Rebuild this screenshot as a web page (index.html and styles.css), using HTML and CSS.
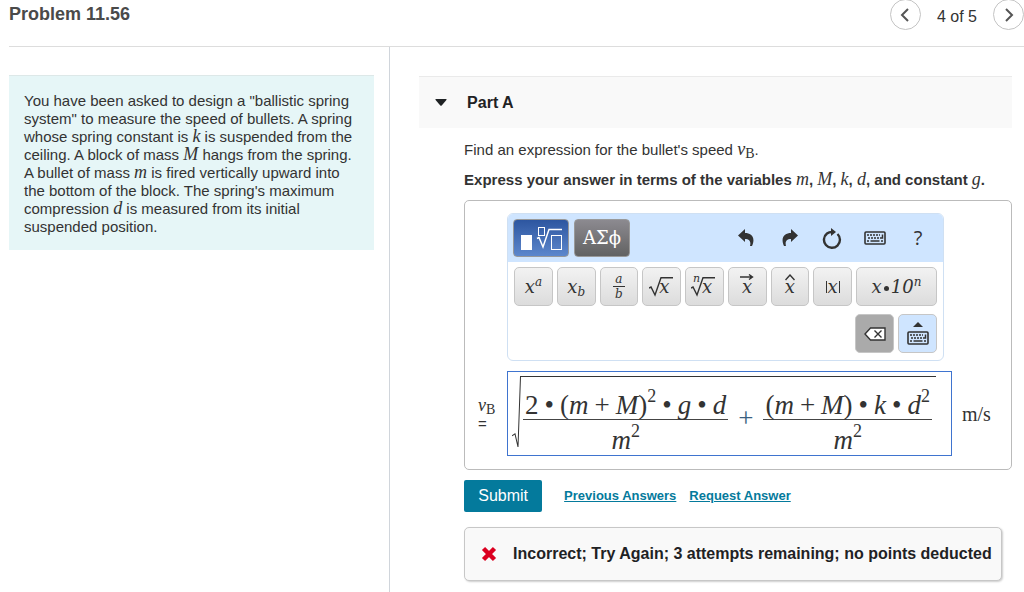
FILE: index.html
```html
<!DOCTYPE html>
<html lang="en">
<head>
    <meta charset="UTF-8">
    <meta name="viewport" content="width=device-width, initial-scale=1.0">
    <title>Problem 11.56</title>
    <link rel="stylesheet" href="styles.css">
</head>
<body>
    <!-- shared icon -->
    <svg class="sprite" aria-hidden="true">
        <symbol id="keyboard" viewBox="0 0 22 14">
            <rect x="1" y="1" width="20" height="12" rx="1" fill="none" stroke="#333" stroke-width="1.6"/>
            <path d="M3 4h2M6 4h2M9 4h2M12 4h2M15 4h1M4 7h2M7 7h2M10 7h2M13 7h2M3 10h2M6.500 10h9M17 10h2M16 7h2.500V3.500" fill="none" stroke="#333" stroke-width="1.5"/>
        </symbol>
    </svg>

    <header class="header">
        <h1>Problem 11.56</h1>
        <nav class="pager">
            <button class="round" aria-label="Previous">
                <svg width="10" height="14" viewBox="0 0 10 14"><path d="M8 1 2 7l6 6"/></svg>
            </button>
            <span>4 of 5</span>
            <button class="round" aria-label="Next">
                <svg width="10" height="14" viewBox="0 0 10 14"><path d="M2 1l6 6-6 6"/></svg>
            </button>
        </nav>
    </header>

    <main class="columns">
        <aside class="left">
            <p class="problem">You have been asked to design a "ballistic spring system" to measure the speed of bullets. A spring whose spring constant is <var>k</var> is suspended from the ceiling. A block of mass <var>M</var> hangs from the spring. A bullet of mass <var>m</var> is fired vertically upward into the bottom of the block. The spring's maximum compression <var>d</var> is measured from its initial suspended position.</p>
        </aside>

        <section class="right">
            <h2 class="part">
                <svg width="12" height="7" viewBox="0 0 12 7"><path d="M1 0h10q1 0 .4.900L6.700 6.500q-.7.700-1.400 0L.6.900Q0 0 1 0z" fill="#1f2224"/></svg>
                Part A
            </h2>

            <div class="content">
                <p class="question">Find an expression for the bullet's speed <var>v</var><span class="sub">B</span>.</p>
                <p class="express">Express your answer in terms of the variables <var>m</var>, <var>M</var>, <var>k</var>, <var>d</var>, and constant <var>g</var>.</p>

                <div class="editor">
                    <div class="toolbar">
                        <div class="top-bar">
                            <button class="tab active" aria-label="Templates">
                                <svg width="44" height="26" viewBox="0 0 44 26" fill="none" stroke="#fff">
                                    <rect x="2" y="10" width="11" height="15" fill="#fff" stroke="none"/>
                                    <rect x="19.500" y="2.500" width="6" height="8"/>
                                    <path d="M18 13.500l2-1 4 9.500L30 4.500h13" stroke-width="1.500"/>
                                    <rect x="32.500" y="10.500" width="10" height="14"/>
                                </svg>
                            </button>
                            <button class="tab greek">ΑΣϕ</button>
                            <div class="actions">
                                <button aria-label="Undo">
                                    <svg width="17" height="18" viewBox="0 0 17 18"><path d="M0 6.500 7 0v4c6 0 11 4 7 13h-2c1-4 0-7-5-7v3z" fill="#333"/></svg>
                                </button>
                                <button aria-label="Redo">
                                    <svg width="17" height="18" viewBox="0 0 17 18"><path d="M17 6.500 10 0v4C4 4-1 8 3 17h2c-1-4 0-7 5-7v3z" fill="#333"/></svg>
                                </button>
                                <button aria-label="Reset">
                                    <svg width="20" height="21" viewBox="0 0 20 21"><path d="M15.500 6A8 8 0 1 1 5 5.500Q7 4 10 4" fill="none" stroke="#333" stroke-width="2.400"/><path d="M9 0l5 4-5 4z" fill="#333"/></svg>
                                </button>
                                <button aria-label="Keyboard shortcuts"><svg width="22" height="14"><use href="#keyboard"/></svg></button>
                                <button class="help">?</button>
                            </div>
                        </div>

                        <div class="keys">
                            <button><i>x</i><sup>a</sup></button>
                            <button><i>x</i><sub>b</sub></button>
                            <button class="fraction-key"><i>a</i><i>b</i></button>
                            <button>
                                <svg width="26" height="20" viewBox="0 0 26 20"><path d="M0 11l2-1 4 8L12 .700h12"/></svg><i class="under-root">x</i>
                            </button>
                            <button>
                                <svg width="26" height="20" viewBox="0 0 26 20"><path d="M0 11l2-1 4 8L12 .700h12"/></svg><i class="under-root">x</i><i class="index">n</i>
                            </button>
                            <button>
                                <i>x</i><svg class="accent" width="14" height="6" viewBox="0 0 14 6"><path d="M0 3h12M9 .500 12.500 3 9 5.500"/></svg>
                            </button>
                            <button>
                                <i>x</i><svg class="accent" width="10" height="7" viewBox="0 0 10 7"><path d="M.5 6 5 1l4.500 5"/></svg>
                            </button>
                            <button><span class="abs">x</span></button>
                            <button class="wide"><i>x</i><span class="dot"></span><i>10</i><sup>n</sup></button>
                        </div>

                        <div class="keys bottom-keys">
                            <button class="delete" aria-label="Delete">
                                <svg width="22" height="14" viewBox="0 0 22 14"><path d="M6.500 1H21v12H6.500L1 7z"/><path d="M10.500 3.500l7 7M17.500 3.500l-7 7"/></svg>
                            </button>
                            <button class="show-keyboard" aria-label="Show keyboard">
                                <svg width="10" height="5" viewBox="0 0 10 5"><path d="M0 5 5 0l5 5z"/></svg>
                                <svg width="22" height="14"><use href="#keyboard"/></svg>
                            </button>
                        </div>
                    </div>

                    <div class="label" id="answer-label"><var>v</var><span class="sub">B</span><br>=</div>

                    <div class="answer" role="textbox" tabindex="0" aria-labelledby="answer-label">
                        <svg class="radical" viewBox="0 0 9 72" preserveAspectRatio="none"><path d="M0 59l3-2 3 13L8.500.500H9"/></svg>
                        <div class="radicand">
                            <div class="fraction">
                                <div class="numerator">
                                    <span>2</span><span class="op">•</span><span>(</span><i>m</i><span class="op">+</span><i>M</i><span>)</span><sup>2</sup><span class="op">•</span><i>g</i><span class="op">•</span><i>d</i>
                                </div>
                                <div class="denominator"><i>m</i><sup>2</sup></div>
                            </div>
                            <span class="plus">+</span>
                            <div class="fraction">
                                <div class="numerator">
                                    <span>(</span><i>m</i><span class="op">+</span><i>M</i><span>)</span><span class="op">•</span><i>k</i><span class="op">•</span><i>d</i><sup>2</sup>
                                </div>
                                <div class="denominator"><i>m</i><sup>2</sup></div>
                            </div>
                        </div>
                    </div>

                    <div class="unit">m/s</div>
                </div>

                <div class="submit-row">
                    <button class="submit">Submit</button>
                    <a href="#">Previous Answers</a>
                    <a href="#">Request Answer</a>
                </div>

                <div class="feedback">
                    <svg width="16" height="16" viewBox="0 0 16 16"><path d="M2.500 2.500l11 11M13.500 2.500l-11 11" stroke="#db0020" stroke-width="4.500"/></svg>
                    <span>Incorrect; Try Again; 3 attempts remaining; no points deducted</span>
                </div>
            </div>
        </section>
    </main>
</body>
</html>
```
FILE: styles.css
```css
* {
    box-sizing: border-box;
    margin: 0;
    padding: 0;
}

body {
    font-family: "Liberation Sans", Arial, sans-serif;
    font-size: 15px;
    line-height: 18px;
    color: #333;
    background-color: #fff;
    min-height: 100vh;
    display: flex;
    flex-direction: column;
}

button {
    font: inherit;
    color: inherit;
    cursor: pointer;
}

svg {
    flex: none;
}

.sprite {
    position: absolute;
    width: 0;
    height: 0;
}

/* variables in running text */
var {
    font-family: "Liberation Serif", "Times New Roman", serif;
    font-size: 18px;
    font-weight: normal;
    line-height: 14px;
}

.sub {
    font-family: "Liberation Serif", "Times New Roman", serif;
    font-size: 14px;
    line-height: 0;
    vertical-align: -3px;
}

/* header */
.header {
    display: flex;
    justify-content: space-between;
    height: 47px;
    margin-left: 9px;
    border-bottom: 1px solid #ddd;
}

h1 {
    font-size: 18px;
    line-height: 29px;
    color: #4a4a4a;
}

.pager {
    display: flex;
    gap: 16px;
    font-size: 16px;
    line-height: 34px;
}

.round {
    display: flex;
    align-items: center;
    justify-content: center;
    width: 31px;
    height: 31px;
    margin-top: -1px;
    border: 1px solid #c4c4c4;
    border-radius: 50%;
    background-color: #fff;
}

.round path {
    fill: none;
    stroke: #555;
    stroke-width: 2;
}

/* columns */
.columns {
    flex: 1;
    display: grid;
    grid-template-columns: 38% 1fr;
}

.left {
    padding: 28px 15px 0 9px;
}

.problem {
    padding: 16px 14px 14px 15px;
    border-top: 1px solid #dde8e8;
    background-color: #e6f6f7;
}

.right {
    padding: 29px 12px 0 29px;
    border-left: 1px solid #d0d5db;
}

.part {
    display: flex;
    align-items: center;
    gap: 20px;
    height: 52px;
    padding-left: 16px;
    border-top: 1px solid #eaeaea;
    background-color: #f9f9f9;
    font-size: 16px;
    color: #1f2224;
}

.content {
    padding-left: 45px;
}

.question {
    margin-top: 13px;
}

.express {
    margin: 12px 0 11px;
    font-weight: bold;
}

/* answer editor */
.editor {
    display: grid;
    grid-template-columns: 19px 1fr 31px;
    column-gap: 10px;
    row-gap: 10px;
    padding: 12px 18px 13px 13px;
    border: 1px solid #bbb;
    border-radius: 5px;
}

.toolbar {
    grid-column: 2;
    margin-right: 8px;
    border: 1px solid #cfe0f3;
    border-radius: 6px;
    overflow: hidden;
}

.top-bar {
    display: flex;
    align-items: center;
    gap: 5px;
    height: 48px;
    padding: 0 5px;
    background-color: #cfe5ff;
}

.tab {
    display: flex;
    align-items: center;
    justify-content: center;
    width: 56px;
    height: 38px;
    border: 1px solid #999;
    border-radius: 4px;
    background: linear-gradient(#8c8a90, #626262);
    color: #fff;
}

.active {
    background: linear-gradient(#2d56a0, #5d87cc);
}

.greek {
    font-family: "DejaVu Serif", serif;
    font-size: 18px;
}

.actions {
    flex: 1;
    display: flex;
    justify-content: flex-end;
    gap: 3px;
}

.actions button {
    display: flex;
    align-items: center;
    justify-content: center;
    width: 40px;
    height: 38px;
    border: none;
    background: none;
}

.actions .help {
    font-family: "Open Sans", sans-serif;
    font-size: 20px;
}

.keys {
    display: flex;
    gap: 4px;
    padding: 5px 6px 0;
}

.keys button {
    flex: 1;
    display: flex;
    align-items: center;
    justify-content: center;
    position: relative;
    height: 39px;
    border: 1px solid #c6c6c6;
    border-radius: 5px;
    background: linear-gradient(#f2f2f2, #dcdcdc);
    font-family: "DejaVu Serif", serif;
    font-size: 18px;
}

.keys path {
    fill: none;
    stroke: #333;
    stroke-width: 1.4;
}

.keys sup,
.keys sub {
    font-size: 12px;
    font-style: italic;
}

.keys sup {
    padding-bottom: 10px;
}

.keys sub {
    padding-top: 10px;
}

.keys .fraction-key {
    flex-direction: column;
    font-size: 12px;
    line-height: 14px;
}

.fraction-key i + i {
    border-top: 1px solid #333;
    padding: 0 2px;
}

.keys .under-root {
    position: absolute;
    left: 16px;
    top: 10px;
}

.keys .index {
    position: absolute;
    left: 7px;
    top: 2px;
    font-size: 11px;
}

.accent {
    position: absolute;
    top: 6px;
}

.abs {
    padding: 0 1px;
    border: solid #333;
    border-width: 0 1px;
    font-style: italic;
    line-height: 12px;
}

.keys .wide {
    flex: 0 0 81px;
}

.dot {
    width: 5px;
    height: 5px;
    margin: 4px 2px 0;
    border-radius: 50%;
    background-color: #333;
}

.bottom-keys {
    justify-content: flex-end;
    padding-top: 8px;
    padding-bottom: 7px;
}

.keys.bottom-keys button {
    flex: 0 0 39px;
}

.bottom-keys .delete {
    background: #aaa;
}

.bottom-keys .delete path:first-child {
    fill: #fff;
}

.bottom-keys .show-keyboard {
    flex-direction: column;
    gap: 4px;
    background: #cfe5ff;
}

.show-keyboard path {
    fill: #333;
    stroke: none;
}

.label {
    grid-column: 1;
    padding-top: 26px;
    white-space: nowrap;
}

/* the formula */
.answer {
    display: flex;
    padding: 4px 15px 1px 4px;
    border: 1px solid #3f74cf;
    font-family: "Liberation Serif", "Times New Roman", serif;
    font-size: 27px;
    line-height: 28px;
}

.radical {
    width: 9px;
    height: 73px;
}

.radical path {
    fill: none;
    stroke: #333;
    stroke-width: 1;
}

.radicand {
    flex: 1;
    display: flex;
    align-items: center;
    justify-content: space-between;
    padding: 0 4px 0 2px;
    border-top: 1px solid #333;
}

.fraction {
    text-align: center;
    white-space: nowrap;
}

.numerator {
    display: flex;
    padding: 14px 2px 0;
    border-bottom: 1px solid #444;
}

.denominator {
    display: flex;
    justify-content: center;
    padding-top: 6px;
}

.op {
    margin: 0 6px;
}

.answer sup {
    margin-top: -9px;
    font-size: 18px;
}

.plus {
    padding-top: 4px;
    color: #3b5f80;
}

.unit {
    align-self: center;
    font-family: "Liberation Serif", "Times New Roman", serif;
    font-size: 20px;
}

/* submit */
.submit-row {
    display: flex;
    align-items: center;
    gap: 13px;
    margin-top: 10px;
}

.submit {
    width: 78px;
    height: 32px;
    margin-right: 9px;
    border: none;
    border-radius: 2px;
    background-color: #047a9c;
    color: #fff;
    font-size: 16px;
}

.submit-row a {
    color: #047a9c;
    font-size: 13px;
    font-weight: bold;
}

.feedback {
    display: flex;
    align-items: center;
    gap: 16px;
    height: 54px;
    margin: 15px 10px 11px 0;
    padding-left: 16px;
    border: 1px solid #c7c7c7;
    border-radius: 5px;
    background-color: #f9f9f9;
    box-shadow: 1px 1px 2px rgba(0, 0, 0, 0.2);
    color: #1f2224;
    font-size: 16px;
    font-weight: bold;
    white-space: nowrap;
}
```
